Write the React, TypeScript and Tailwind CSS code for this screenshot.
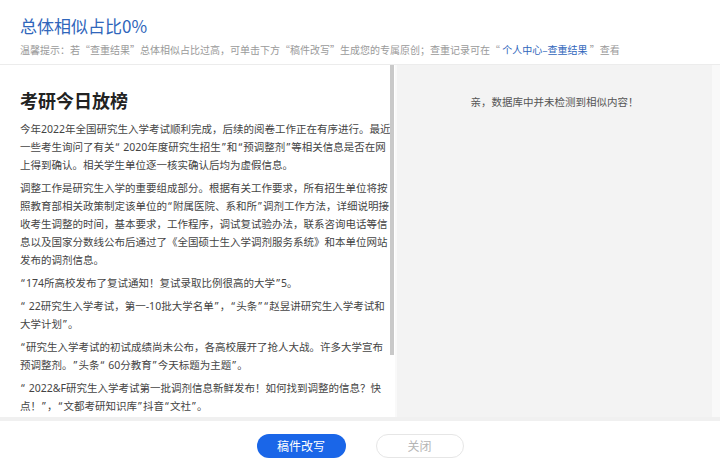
import React from 'react';

// lines are broken where the reference breaks them
const paragraphs: string[][] = [
  [
    '今年2022年全国研究生入学考试顺利完成，后续的阅卷工作正在有序进行。最近',
    '一些考生询问了有关“ 2020年度研究生招生”和“预调整剂”等相关信息是否在网',
    '上得到确认。相关学生单位逐一核实确认后均为虚假信息。',
  ],
  [
    '调整工作是研究生入学的重要组成部分。根据有关工作要求，所有招生单位将按',
    '照教育部相关政策制定该单位的“附属医院、系和所”调剂工作方法，详细说明接',
    '收考生调整的时间，基本要求，工作程序，调试复试验办法，联系咨询电话等信',
    '息以及国家分数线公布后通过了《全国硕士生入学调剂服务系统》和本单位网站',
    '发布的调剂信息。',
  ],
  ['“174所高校发布了复试通知！复试录取比例很高的大学”5。'],
  ['“ 22研究生入学考试，第一-10批大学名单”，“头条”“赵昱讲研究生入学考试和', '大学计划”。'],
  ['“研究生入学考试的初试成绩尚未公布，各高校展开了抢人大战。许多大学宣布', '预调整剂。”头条“ 60分教育”今天标题为主题”。'],
  ['“ 2022&F研究生入学考试第一批调剂信息新鲜发布！如何找到调整的信息？快', '点！”，“文都考研知识库”抖音“文社”。'],
];

// quotes get a half-width box, as in the reference font
function Line({ text }: { text: string }) {
  const parts = text.split(/([“”])/);
  return (
    <span className="block whitespace-nowrap">
      {parts.map((p, i) =>
        p === '“' || p === '”' ? (
          <span key={i} className="inline-block w-[6px] text-center">
            {p}
          </span>
        ) : (
          <React.Fragment key={i}>{p}</React.Fragment>
        ),
      )}
    </span>
  );
}

export default function App() {
  return (
    <div
      className="w-[720px] h-[469px] flex flex-col bg-white overflow-hidden"
      style={{ fontFamily: '"Noto Sans CJK SC", "Noto Sans", sans-serif' }}
    >
      {/* Header */}
      <div className="h-[64px] px-[20px] pt-[14px] shrink-0">
        <div className="text-[17px] leading-[24px] text-[#3066bb]">总体相似占比0%</div>
        <div className="mt-[5px] text-[10px] leading-[14px] text-[#9a9a9a] whitespace-nowrap">
          温馨提示：若“查重结果”总体相似占比过高，可单击下方“稿件改写”生成您的专属原创；查重记录可在“
          <span className="text-[#3066bb]"> 个人中心–查重结果 </span>”查看
        </div>
      </div>

      {/* Main */}
      <div className="h-[357px] shrink-0 flex bg-[#f9f9f9] border-t border-[#ececec] border-b-[4px] border-b-[#f0f0f0]">
        <div
          className="w-[390px] bg-white pl-[20px] pt-[24px] overflow-hidden"
          style={{ fontFamily: '"Noto Sans", "Noto Sans CJK SC", sans-serif' }}
        >
          <h1 className="text-[18px] leading-[24px] font-bold text-[#222] mb-[7px]">考研今日放榜</h1>
          {paragraphs.map((lines, i) => (
            <p key={i} className="text-[10.5px] leading-[18px] text-[#444] mb-[5px]">
              {lines.map((l, j) => (
                <Line key={j} text={l} />
              ))}
            </p>
          ))}
        </div>
        <div className="w-[5px] bg-white flex flex-col">
          <div className="w-[4px] h-[290px] bg-[#c9c9c9]" />
        </div>
        <div className="w-[2px]" />
        <div className="w-[315px] bg-[#f3f3f3] pt-[30px] text-center text-[10.5px] leading-[14px] text-[#555]">
          亲，数据库中并未检测到相似内容！
        </div>
      </div>

      {/* Footer */}
      <div className="flex-1 flex items-center justify-center gap-[30px] pt-[2px]">
        <button className="w-[89px] h-[24px] rounded-full bg-[#1a66e8] text-white text-[12px]">稿件改写</button>
        <button className="w-[88px] h-[24px] rounded-full border border-[#e6e6e6] bg-white text-[#b5b5b5] text-[12px]">关闭</button>
      </div>
    </div>
  );
}
